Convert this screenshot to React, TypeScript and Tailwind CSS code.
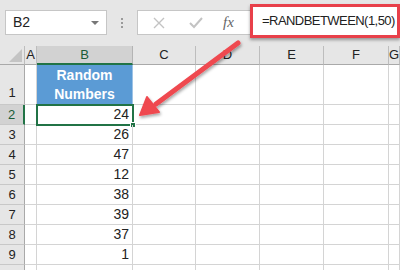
import React from 'react'

const cols = ['A', 'B', 'C', 'D', 'E', 'F', 'G']
const values = [24, 26, 47, 12, 38, 39, 37, 1]

function ColHeader({ label, active }: { label: string; active?: boolean }) {
  return (
    <div
      className={
        active
          ? 'flex items-center justify-center bg-[#d2d2d2] border-r border-r-[#b4b4b4] border-b-2 border-b-[#217346] text-[13px] text-[#1a5c38]'
          : 'flex items-center justify-center bg-[#e6e6e6] border-r border-r-[#bdbdbd] border-b border-b-[#a9a9a9] text-[13px] text-[#222]'
      }
    >
      {label}
    </div>
  )
}

function RowHeader({ n, active, tall }: { n?: number; active?: boolean; tall?: boolean }) {
  return (
    <div
      className={
        (active
          ? 'bg-[#d2d2d2] border-r-2 border-r-[#217346] text-[#1a5c38] '
          : 'bg-[#e6e6e6] border-r border-r-[#a9a9a9] text-[#222] ') +
        'flex justify-center border-b border-b-[#c8c8c8] text-[13px] ' +
        (tall ? 'items-end pb-[2px]' : 'items-center')
      }
    >
      {n}
    </div>
  )
}

function Cell({ children, className = '' }: { children?: React.ReactNode; className?: string }) {
  return <div className={'border-r border-b border-[#d4d4d4] ' + className}>{children}</div>
}

function EmptyRow() {
  return (
    <>
      <Cell />
      <Cell />
      <Cell />
      <Cell />
      <Cell />
    </>
  )
}

export default function App() {
  return (
    <div className="relative w-[400px] h-[270px] overflow-hidden bg-white font-['Liberation_Sans',Arial,sans-serif]">
      {/* formula bar */}
      <div className="h-[46px] bg-[#e6e6e6] flex items-start pt-[10px] pl-[5px]">
        <div className="w-[102px] h-[25px] bg-white border border-[#c6c6c6] flex items-center justify-between pl-[7px] pr-[7px]">
          <span className="text-[14px] text-[#222]">B2</span>
          <span className="w-0 h-0 border-l-[4px] border-r-[4px] border-t-[4px] border-l-transparent border-r-transparent border-t-[#777]" />
        </div>
        <div className="w-[30px] h-[25px] flex flex-col items-center justify-center gap-[2px]">
          <span className="w-[2px] h-[2px] bg-[#9a9a9a]" />
          <span className="w-[2px] h-[2px] bg-[#9a9a9a]" />
          <span className="w-[2px] h-[2px] bg-[#9a9a9a]" />
        </div>
        <div className="w-[113px] h-[25px] bg-white border border-[#c6c6c6] border-r-0 flex items-center">
          <svg width="12" height="12" viewBox="0 0 12 12" className="ml-[15px]">
            <path d="M1 1 L11 11 M11 1 L1 11" stroke="#c3c3c3" strokeWidth="1.4" />
          </svg>
          <svg width="14" height="12" viewBox="0 0 14 12" className="ml-[24px]">
            <path d="M1 6 L5 10 L13 1" stroke="#c3c3c3" strokeWidth="2" fill="none" />
          </svg>
          <span className="ml-[20px] text-[15px] italic text-[#666] font-['Liberation_Serif',serif]">fx</span>
        </div>
        <div className="-mt-[6px] flex-1 h-[34px] bg-white border-[3px] border-[#e8404a] shadow-[0_2px_3px_rgba(0,0,0,0.35)] flex items-center pl-[9px] overflow-hidden">
          <span className="text-[13px] text-[#222] whitespace-nowrap tracking-[-0.55px]">=RANDBETWEEN(1,50)</span>
        </div>
      </div>

      {/* sheet */}
      <div className="grid grid-cols-[25px_12px_96px_63px_64px_64px_65px_11px] grid-rows-[19px_40px_20px_20px_20px_20px_20px_20px_20px_20px_20px]">
        <div className="bg-[#e6e6e6] border-r border-r-[#bdbdbd] border-b border-b-[#a9a9a9] flex items-end justify-end p-[2px]">
          <svg width="13" height="13" viewBox="0 0 13 13">
            <path d="M13 0 L13 13 L0 13 Z" fill="#c4c4c4" />
          </svg>
        </div>
        {cols.map((c) => (
          <ColHeader key={c} label={c} active={c === 'B'} />
        ))}

        {/* row 1 */}
        <RowHeader n={1} tall />
        <Cell />
        <Cell className="bg-[#5b9bd5] border-r-[#9dc3e6] flex items-center justify-center text-center text-white font-bold text-[14px] leading-[19px]">
          <span>
            Random
            <br />
            Numbers
          </span>
        </Cell>
        <EmptyRow />

        {values.map((v, i) => (
          <React.Fragment key={i}>
            <RowHeader n={i + 2} active={i === 0} />
            <Cell />
            <Cell className="relative flex items-center justify-end pr-[3px] text-[14px] text-[#222]">
              {i === 0 && (
                <>
                  <div className="absolute -left-[1px] -top-[1px] w-[98px] h-[22px] border-2 border-[#217346]" />
                  <div className="absolute -right-[4px] -bottom-[4px] w-[6px] h-[6px] bg-[#217346] border border-white" />
                </>
              )}
              <span className="relative">{v}</span>
            </Cell>
            <EmptyRow />
          </React.Fragment>
        ))}

        <RowHeader />
        <Cell />
        <Cell />
        <EmptyRow />
      </div>

      {/* arrow annotation */}
      <svg className="absolute left-0 top-0 pointer-events-none" width="400" height="270" viewBox="0 0 400 270">
        <defs>
          <filter id="sh" x="-20%" y="-20%" width="140%" height="140%">
            <feDropShadow dx="1" dy="2" stdDeviation="1.5" floodColor="#000" floodOpacity="0.35" />
          </filter>
        </defs>
        <g filter="url(#sh)">
          <path d="M238 43 L156 104" stroke="#ef4850" strokeWidth="5" strokeLinecap="round" />
          <path d="M140 115 L147 97 L159 112 Z" fill="#ef4850" stroke="#ef4850" strokeWidth="2" strokeLinejoin="round" />
        </g>
      </svg>
    </div>
  )
}
